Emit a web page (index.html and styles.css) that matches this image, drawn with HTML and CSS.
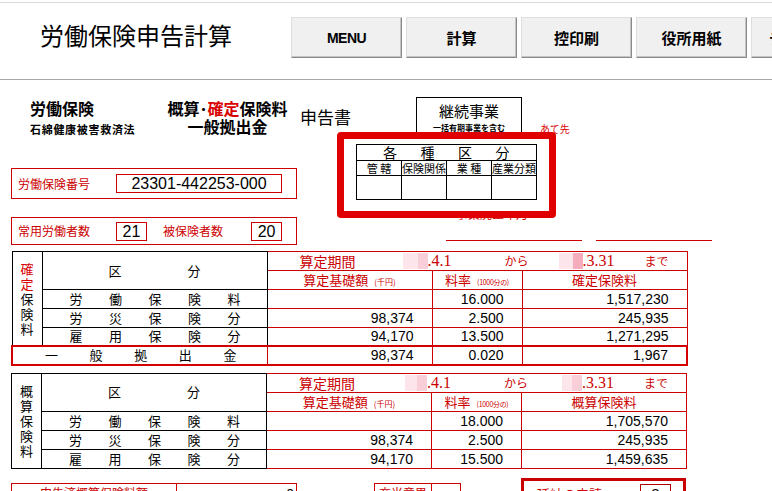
FILE: index.html
```html
<!DOCTYPE html>
<html lang="ja">
<head>
<meta charset="utf-8">
<title>労働保険申告計算</title>
<link rel="stylesheet" href="styles.css">
</head>
<body>
<div class="topedge"></div>
<header class="header">
  <div class="title">労働保険申告計算</div>
  <div class="btn btn-menu">MENU</div>
  <div class="btn">計算</div>
  <div class="btn">控印刷</div>
  <div class="btn">役所用紙</div>
  <div class="btn">データ保存</div>
</header>

<main class="sheet">
  <div class="heading">
    <div class="h-left">
      <div class="l1">労働保険</div>
      <div class="l2">石綿健康被害救済法</div>
    </div>
    <div class="h-mid">
      <div>概算･<span class="red">確定</span>保険料</div>
      <div>一般拠出金</div>
    </div>
    <div class="h-title">申告書</div>
    <div class="keizoku">
      <div class="k1">継続事業</div>
      <div class="k2">一括有期事業を含む</div>
    </div>
    <div class="ateaki">あて先</div>
  </div>

  <div class="frow">
    <div class="box box1">
      <span class="lbl">労働保険番号</span>
      <span class="inbox no">23301-442253-000</span>
    </div>
  </div>
  <div class="gaprow"><span class="jigyo">事業廃止年月</span></div>
  <div class="frow">
    <div class="box box2">
      <span class="lbl">常用労働者数</span>
      <span class="inbox cnt c-first">21</span>
      <span class="lbl lbl2">被保険者数</span>
      <span class="inbox cnt c-second">20</span>
    </div>
    <div class="uline ul1"></div>
    <div class="uline ul2"></div>
  </div>

  <table class="tbl t1">
    <colgroup><col class="w30"><col class="w225"><col class="w165"><col class="w90"><col class="w165"></colgroup>
    <tr class="r19">
      <td rowspan="5" class="vlab"><span class="red">確<br>定</span><br>保<br>険<br>料</td>
      <td rowspan="2" class="kubun"><div><span>区</span><span class="bun">分</span></div></td>
      <td colspan="3" class="rc period">
        <div class="pin">
          <span class="p-lab">算定期間</span>
          <span class="pink p1"><i class="lt w15"></i><i class="dk w10"></i></span>
          <span class="date">.4.1</span>
          <span class="kana kara">から</span>
          <span class="pink p2"><i class="lt w14"></i><i class="dk2 w10"></i></span>
          <span class="date">.3.31</span>
          <span class="kana made">まで</span>
        </div>
      </td>
    </tr>
    <tr class="r19">
      <td class="rc hd">算定基礎額<small>(千円)</small></td>
      <td class="rc hd">料率<small class="tiny">(1000分の)</small></td>
      <td class="rc hd">確定保険料</td>
    </tr>
    <tr class="r19">
      <td class="lab"><div><span>労</span><span>働</span><span>保</span><span>険</span><span>料</span></div></td>
      <td class="rc num"></td><td class="rc num">16.000</td><td class="rc num">1,517,230</td>
    </tr>
    <tr class="r19">
      <td class="lab"><div><span>労</span><span>災</span><span>保</span><span>険</span><span>分</span></div></td>
      <td class="rc num">98,374</td><td class="rc num">2.500</td><td class="rc num">245,935</td>
    </tr>
    <tr class="r18">
      <td class="lab"><div><span>雇</span><span>用</span><span>保</span><span>険</span><span>分</span></div></td>
      <td class="rc num">94,170</td><td class="rc num">13.500</td><td class="rc num">1,271,295</td>
    </tr>
    <tr class="r19 ippan">
      <td colspan="2" class="lab2"><div><span>一</span><span>般</span><span>拠</span><span>出</span><span>金</span></div></td>
      <td class="rc num">98,374</td><td class="rc num">0.020</td><td class="rc num">1,967</td>
    </tr>
  </table>

  <table class="tbl t2">
    <colgroup><col class="w30"><col class="w225"><col class="w165"><col class="w90"><col class="w165"></colgroup>
    <tr class="r19">
      <td rowspan="5" class="vlab">概<br>算<br>保<br>険<br>料</td>
      <td rowspan="2" class="kubun"><div><span>区</span><span class="bun">分</span></div></td>
      <td colspan="3" class="rc period">
        <div class="pin">
          <span class="p-lab">算定期間</span>
          <span class="pink p1b"><i class="lt w12"></i><i class="dk w10"></i></span>
          <span class="date">.4.1</span>
          <span class="kana kara">から</span>
          <span class="pink p2b"><i class="lt w10"></i><i class="dk w10"></i></span>
          <span class="date">.3.31</span>
          <span class="kana made">まで</span>
        </div>
      </td>
    </tr>
    <tr class="r19">
      <td class="rc hd">算定基礎額<small>(千円)</small></td>
      <td class="rc hd">料率<small class="tiny">(1000分の)</small></td>
      <td class="rc hd">概算保険料</td>
    </tr>
    <tr class="r19">
      <td class="lab"><div><span>労</span><span>働</span><span>保</span><span>険</span><span>料</span></div></td>
      <td class="rc num"></td><td class="rc num">18.000</td><td class="rc num">1,705,570</td>
    </tr>
    <tr class="r19">
      <td class="lab"><div><span>労</span><span>災</span><span>保</span><span>険</span><span>分</span></div></td>
      <td class="rc num">98,374</td><td class="rc num">2.500</td><td class="rc num">245,935</td>
    </tr>
    <tr class="r19">
      <td class="lab"><div><span>雇</span><span>用</span><span>保</span><span>険</span><span>分</span></div></td>
      <td class="rc num">94,170</td><td class="rc num">15.500</td><td class="rc num">1,459,635</td>
    </tr>
  </table>

  <div class="brow">
    <div class="bbox b1"><div class="bc1">申告済概算保険料額</div><div class="bc2">0</div></div>
    <div class="bbox b2"><div class="bc1 jt">充当意思</div><div class="bc2"></div></div>
    <div class="b3"><span class="enno">延納の申請</span><span class="inb3">3</span></div>
  </div>
</main>

<div class="sel">
  <table class="kt">
    <tr class="k-r1"><td colspan="4"><div class="kspread"><span>各</span><span>種</span><span>区</span><span>分</span></div></td></tr>
    <tr class="k-r2"><td>管&nbsp;轄</td><td>保険関係</td><td>業&nbsp;種</td><td>産業分類</td></tr>
    <tr class="k-r3"><td></td><td></td><td></td><td></td></tr>
  </table>
</div>
</body>
</html>
```

FILE: styles.css
```css
html, body {
  margin: 0;
  padding: 0;
  overflow: hidden;
  background: #fff;
}
body {
  width: 772px;
  height: 491px;
  position: relative;
  font-family: "Noto Sans CJK JP", sans-serif;
  color: #000;
  white-space: nowrap;
}
.red { color: #d80000; }

.topedge {
  height: 2px;
  border-bottom: 1px solid #dadada;
}
.header {
  display: flex;
  align-items: flex-start;
  height: 76px;
  border-bottom: 1px solid #a8a8a8;
}
.title {
  font-size: 24px;
  line-height: 30px;
  margin: 17px 0 0 40px;
  width: 251px;
  flex-shrink: 0;
}
.btn {
  flex-shrink: 0;
  width: 111px;
  height: 41px;
  margin: 14px 4px 0 0;
  box-sizing: border-box;
  background: #f0f0f0;
  border: 1px solid;
  border-color: #dedede #8a8a8a #8a8a8a #dedede;
  box-shadow: inset -1px -1px 0 #c4c4c4;
  display: flex;
  align-items: center;
  justify-content: center;
  font-family: "Liberation Sans", "Noto Sans CJK JP", sans-serif;
  font-weight: bold;
  font-size: 15px;
}
.btn-menu { font-size: 14px; letter-spacing: -0.5px; }

/* heading */
.heading {
  display: flex;
  align-items: flex-start;
  height: 88px;
}
.h-left {
  margin-left: 30px;
  width: 135px;
  padding-top: 19px;
}
.h-left .l1 {
  font-size: 16px;
  font-weight: bold;
  line-height: 18px;
}
.h-left .l2 {
  font-size: 11px;
  font-weight: bold;
  line-height: 12px;
  margin-top: 6px;
  letter-spacing: 0.7px;
}
.h-mid {
  width: 125px;
  padding-top: 19px;
  text-align: center;
  font-size: 16px;
  font-weight: bold;
  line-height: 18px;
}
.h-title {
  width: 116px;
  margin-left: 10px;
  padding-top: 27px;
  font-size: 17px;
  line-height: 20px;
}
.keizoku {
  width: 106px;
  height: 50px;
  box-sizing: border-box;
  border: 1px solid #000;
  margin-top: 17px;
  text-align: center;
}
.k1 {
  font-size: 15px;
  line-height: 18px;
  padding-top: 4px;
}
.k2 {
  font-size: 8px;
  font-weight: bold;
  line-height: 10px;
  margin-top: 3px;
}
.ateaki {
  margin-left: 18px;
  padding-top: 44px;
  font-size: 10px;
  line-height: 10px;
  color: #d80000;
}

/* field rows */
.frow {
  display: flex;
  align-items: flex-start;
  margin-left: 11px;
}
.box {
  border: 1px solid #cc0000;
  box-sizing: border-box;
  display: flex;
  align-items: center;
}
.box1 { width: 286px; height: 31px; }
.box2 { width: 286px; height: 28px; }
.lbl {
  color: #cc0000;
  font-size: 12px;
  line-height: 14px;
  margin-left: 6px;
}
.lbl2 { margin-left: 16px; }
.inbox {
  border: 1px solid #cc0000;
  box-sizing: border-box;
  height: 19px;
  font-family: "Liberation Sans", sans-serif;
  font-size: 16px;
  line-height: 17px;
  text-align: center;
}
.no { width: 166px; margin-left: 26px; }
.cnt { width: 31px; height: 19px; }
.c-first { margin-left: 26px; }
.c-second { margin-left: 28px; }
.gaprow {
  height: 18px;
  padding-left: 456px;
  box-sizing: border-box;
}
.jigyo {
  display: inline-block;
  padding-top: 8px;
  font-size: 12px;
  line-height: 14px;
  color: #cc0000;
}
.uline {
  height: 0;
  border-top: 1px solid #cc0000;
  margin-top: 23px;
}
.ul1 { margin-left: 149px; width: 136px; }
.ul2 { margin-left: 14px; width: 116px; }

/* tables */
.tbl {
  border-collapse: collapse;
  table-layout: fixed;
  width: 675px;
  margin-left: 11px;
  font-size: 13px;
}
.t1 { margin-top: 6px; }
.t2 { margin-top: 7px; }
.w30 { width: 30px; }
.w225 { width: 225px; }
.w165 { width: 165px; }
.w90 { width: 90px; }
.tbl td {
  padding: 0;
  overflow: hidden;
  line-height: 16px;
}
.r19 { height: 19px; }
.r18 { height: 18px; }
.vlab {
  border: 1px solid #000;
  text-align: center;
  vertical-align: middle;
  font-size: 13px;
}
.tbl td.vlab { line-height: 15px; }
.kubun {
  border: 1px solid #000;
  vertical-align: middle;
}
.kubun div {
  padding-left: 66px;
  line-height: 16px;
}
.kubun .bun { margin-left: 66px; }
.lab { border: 1px solid #000; }
.lab div {
  display: flex;
  gap: 26.5px;
  padding-left: 27px;
  line-height: 16px;
}
.rc { border: 1px solid #cc0000; }
.num {
  text-align: right;
  font-family: "Liberation Sans", sans-serif;
  font-size: 14px;
}
.tbl td.num { padding-right: 18px; }
.hd {
  text-align: center;
  color: #cc0000;
  font-size: 13px;
}
.hd small {
  font-size: 8px;
  line-height: 0;
  margin-left: 6px;
}
.hd small.tiny {
  font-size: 7px;
  letter-spacing: -0.3px;
}
.pin {
  display: flex;
  align-items: center;
  color: #cc0000;
  height: 17px;
}
.p-lab {
  margin-left: 32px;
  font-size: 14px;
  width: 56px;
}
.pink {
  display: flex;
  height: 16px;
}
.pink i { display: block; height: 16px; }
.lt { background: #fce6ec; }
.dk { background: #f8cfd9; }
.dk2 { background: #f5adbd; }
.w15 { width: 15px; }
.w14 { width: 14px; }
.w12 { width: 12px; }
.w10 { width: 10px; }
.p1 { margin-left: 47px; }
.p1b { margin-left: 50px; }
.date {
  font-family: "Liberation Serif", serif;
  font-size: 16px;
  line-height: 16px;
}
.kana {
  font-size: 12px;
  line-height: 14px;
}
.kara { margin-left: 53px; }
.p2 { margin-left: 30px; }
.p2b { margin-left: 34px; }
.made { margin-left: 30px; }

.ippan td {
  border-top: 2px solid #d40000;
  border-bottom: 2px solid #d40000;
}
.ippan td.lab2 {
  border-left: 2px solid #d40000;
  border-right: 1px solid #cc0000;
}
.ippan td:last-child { border-right: 2px solid #d40000; }
.lab2 div {
  display: flex;
  justify-content: space-between;
  padding: 0 30px 0 32px;
  line-height: 16px;
}

/* bottom row */
.brow {
  display: flex;
  align-items: flex-start;
  margin: 9px 0 0 11px;
}
.bbox {
  display: flex;
  box-sizing: border-box;
  height: 30px;
  margin-top: 5px;
  border: 1px solid #cc0000;
}
.b1 { width: 286px; }
.b2 { width: 87px; margin-left: 77px; }
.bc1 {
  width: 164px;
  border-right: 1px solid #cc0000;
  color: #cc0000;
  text-align: center;
  font-size: 12px;
  line-height: 18px;
  padding-top: 0;
}
.b2 .bc1 { width: 56px; }
.bc2 {
  flex: 1;
  text-align: right;
  padding: 0 2px 0 0;
  font-family: "Liberation Sans", sans-serif;
  font-size: 14px;
  line-height: 20px;
}
.b3 {
  display: flex;
  align-items: flex-start;
  box-sizing: border-box;
  width: 165px;
  height: 30px;
  margin-left: 60px;
  border: 3px solid #c80000;
}
.enno {
  margin: 4px 0 0 13px;
  color: #cc0000;
  font-size: 13px;
  line-height: 18px;
}
.inb3 {
  margin: 3px 0 0 38px;
  width: 31px;
  height: 20px;
  box-sizing: border-box;
  border: 1px solid #b00000;
  text-align: center;
  font-family: "Liberation Sans", sans-serif;
  font-size: 15px;
  line-height: 18px;
}

/* red highlight overlay over the category table */
.sel {
  position: absolute;
  left: 337px;
  top: 132px;
  width: 219px;
  height: 86px;
  box-sizing: border-box;
  border: 7px solid #e00000;
  border-radius: 4px;
  background: #fff;
  padding: 5px 0 0 12px;
}
.kt {
  border-collapse: collapse;
  table-layout: fixed;
  width: 181px;
}
.kt td {
  border: 1px solid #000;
  padding: 0;
  text-align: center;
  font-size: 11px;
  line-height: 13px;
  width: 45px;
}
.k-r1 { height: 16px; }
.k-r2 { height: 15px; }
.k-r3 { height: 24px; }
.kspread {
  display: flex;
  gap: 23.5px;
  padding-left: 26px;
  font-size: 14px;
  line-height: 15px;
}
```
